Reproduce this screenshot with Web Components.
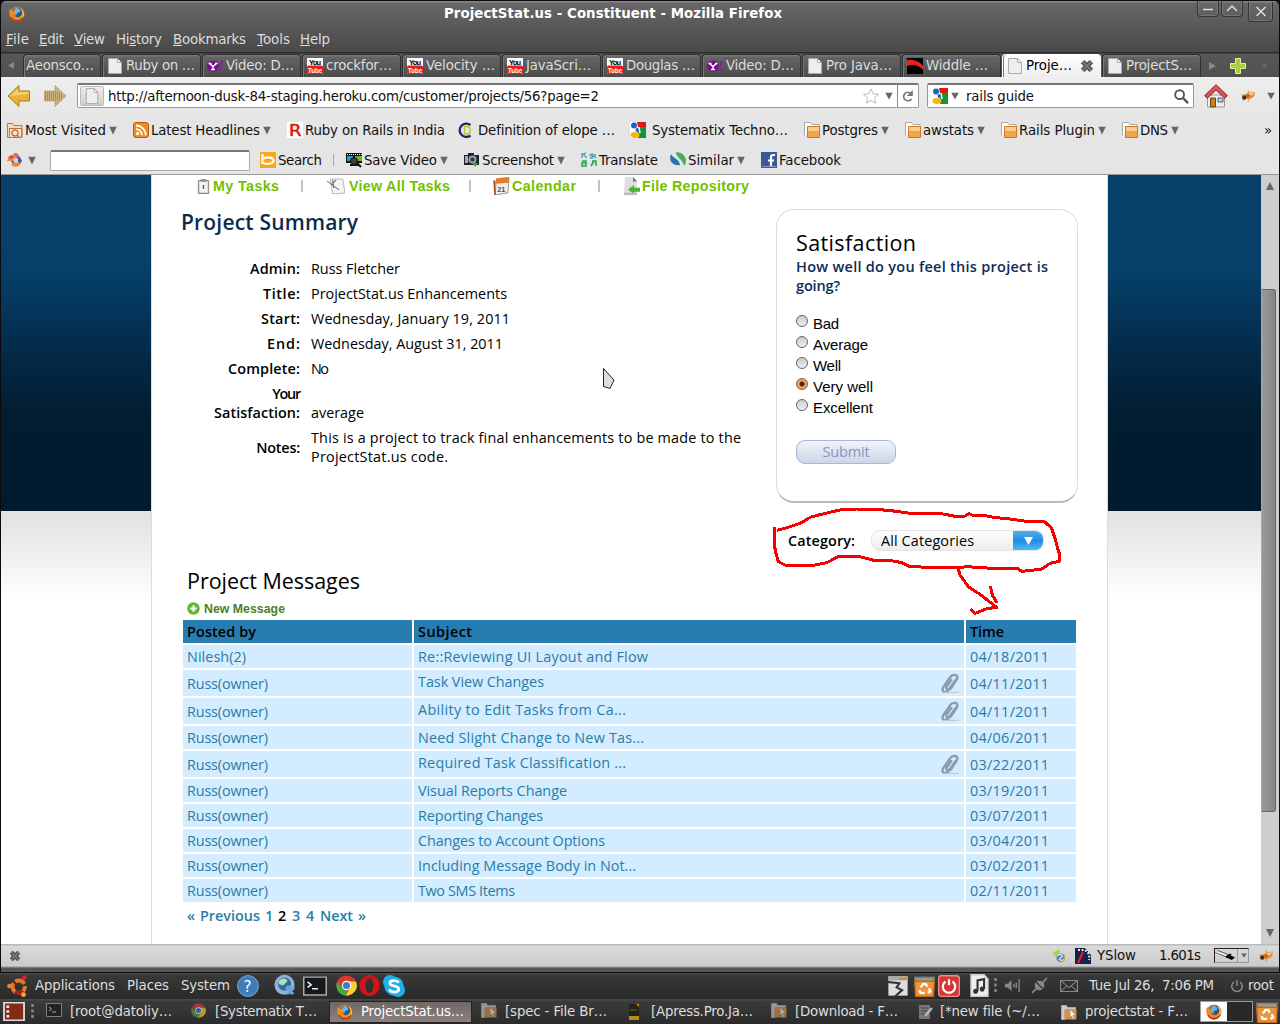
<!DOCTYPE html>
<html lang="en"><head><meta charset="utf-8"><title>ProjectStat.us - Constituent</title>
<style>
html,body{margin:0;padding:0;background:#0c0a0d}
body{width:1280px;height:1024px;overflow:hidden;font-family:"DejaVu Sans",sans-serif;font-size:13.33px}
</style></head><body>
<desktop-screen></desktop-screen>
<script>
const ICONS={
firefox:'<circle cx="8" cy="8" r="7.500" fill="#e8731c"/><circle cx="8.300" cy="6.800" r="5" fill="#215b98"/><path d="M7 2c3 0 5 2 4 4l-3 1-1 3C4 8 4 4 7 2z" fill="#69b5e2"/><path d="M1 3c1 2 3 2 4 2L7 8l-2 1c2 3 6 3 8-1 1-2 0-4-1-5 4 2 4 8 1 10-4 4-10 2-12-3C0 7 0 5 1 3z" fill="#f08a1e"/><path d="M12 3c3 3 3 7 0 9" stroke="#ffd54a" fill="none"/><path d="M2 11c3 5 9 5 12 0" stroke="#b53312" stroke-width="1.300" fill="none"/>',
page:'<path d="M1.500 .5h9l4 4v11h-13z" fill="#eee" stroke="#aaa"/><path d="M10.500 .5v4h4z" fill="#fff" stroke="#aaa"/>',
yahoo:'<ellipse cx="6" cy="8" rx="6" ry="5.500" fill="#770f8e"/><path d="M2.500 5.500L6 8.500l3.500-3M6 8.500V12M4 11.500h4M1.500 5.500h3M8 5.500h2.500" stroke="#fff" stroke-width="1.400" fill="none"/><path d="M13.500 3H16l-2 6.500h-1zM12.500 10.500h1.800v2h-1.800z" fill="#8a1aa5"/>',
youtube:'<path d="M0 0h16v16H0z" fill="#fff"/><rect y="7.500" width="16" height="8.500" rx="1.500" fill="#ee1c1b"/><text x="2" y="6.500" font-size="7.500" font-weight="700" font-family="Liberation Sans" textLength="12" fill="#000">You</text><text x="1" y="14.500" font-size="7.500" font-weight="700" font-family="Liberation Sans" textLength="14" lengthAdjust="spacingAndGlyphs" fill="#fff">Tube</text>',
widdle:'<path d="M0 0h16v16H0z" fill="#000"/><path d="M0 2c7-1 13 2 16 6v4C12 7 6 6 0 8z" fill="#ed2024"/>',
back:'<path d="M1 12L12 1.500V7h10.500v10H12v5.500z" fill="#eab13a" stroke="#b17a14"/><path d="M3 12l8-7.500V8h10.500v2z" fill="#f7cf70"/>',
forward:'<path d="M23 12L12 1.500V7H1.500v10H12v5.500z" fill="#c8b078" stroke="#a08544" stroke-dasharray="1 1"/><path d="M2 9h16M2 11h18M2 13h18M2 15h16" stroke="#8e7639" stroke-dasharray="1 1"/>',
star:'<path d="M8 .8l2.200 5 5.300.5-4 3.600 1.200 5.300L8 12.400l-4.700 2.800 1.200-5.300-4-3.600 5.300-.5z" fill="#fff" stroke="#bbb"/>',
reload:'<path d="M12.500 4.500A5.300 5.300 0 1 0 13 11" fill="none" stroke="#777" stroke-width="2"/><path d="M14.500 0v7.500H7z" fill="#777"/>',
google:'<path d="M0 0h16v16H0z" fill="#fff"/><path d="M7 0h9v5H8z" fill="#e3170a"/><path d="M8 5h8v11H8z" fill="#149337"/><circle cx="4" cy="3.500" r="3" fill="#1566c0"/><circle cx="7.500" cy="8" r="2" fill="#1566c0"/><ellipse cx="5" cy="13" rx="4.500" ry="3" fill="#f4b616"/><path d="M9 5l1 6" stroke="#fff" stroke-width="1.500"/>',
lens:'<circle cx="6" cy="6" r="4.700" fill="none" stroke="#555" stroke-width="2"/><path d="M9.500 9.500l5.500 5.500" stroke="#555" stroke-width="2.500"/>',
home:'<path d="M3.500 11h17v12h-17z" fill="#eee" stroke="#999"/><path d="M6.500 14h5v9h-5z" fill="#c98218" stroke="#6c4a14"/><path d="M14 14h5v4h-5z" fill="#b8d4ea" stroke="#557"/><path d="M12 .7L.7 11.500l2.500 2.700L12 6l8.800 8.200 2.500-2.700z" fill="#d95555" stroke="#8d2020"/>',
bug:'<path d="M3 13l3-4M8 14l1-4M1 7h5M8 2l1 4M15 4l-3 2" stroke="#b39b74" stroke-width=".8"/><ellipse cx="9.500" cy="7.500" rx="5.500" ry="3.300" transform="rotate(-25 9.500 7.500)" fill="#e08a2c"/><path d="M8 5l6-1-2 4z" fill="#f7c98a"/><circle cx="8" cy="8" r="1" fill="#a33"/><circle cx="4.200" cy="9.500" r="2.200" fill="#4b2c15"/>',
visited:'<path d="M.5 1.500h5l1.500 2h8v12H.5z" fill="#f4d9bb" stroke="#c2733a"/><rect x="2.500" y="6.500" width="12" height="9" fill="#f6e9dc" stroke="#c2733a"/><circle cx="8" cy="11" r="3" fill="none" stroke="#c2733a" stroke-width="1.400"/><path d="M10 13l3 3" stroke="#c2733a" stroke-width="1.500"/>',
rss:'<rect x=".5" y=".5" width="15" height="15" rx="2.500" fill="#f28a1d" stroke="#bd5a10"/><circle cx="4.500" cy="11.500" r="1.700" fill="#fff"/><path d="M3 7.200a6 6 0 0 1 6 6M3 3.500a9.500 9.500 0 0 1 9.700 9.700" fill="none" stroke="#fff" stroke-width="1.800"/>',
ruby:'<path d="M0 0h16v16H0z" fill="#fff"/><text x="2" y="13.500" font-size="15" fill="#e80f0f" stroke="#e80f0f" stroke-width=".5" font-family="DejaVu Sans" textLength="12.500" lengthAdjust="spacingAndGlyphs">R</text>',
cd:'<path d="M13.500 3A6.700 6.700 0 1 0 13.500 13.500" fill="none" stroke="#28206b" stroke-width="2.300"/><path d="M7.500 4.500v7.500h2c5 0 5-7.500 0-7.500z" fill="none" stroke="#b8cc22" stroke-width="1.500"/>',
folder:'<path d="M.5 13.500V.5h6l1.500 2h7v3" fill="#fff" stroke="#aaa"/><path d="M3.500 4.500h12v11h-12z" fill="#efa548" stroke="#c67b22"/><path d="M4 5h11v4H4z" fill="#f9cd8c"/>',
swirl:'<ellipse cx="9" cy="8" rx="5" ry="5" fill="#7a52b4"/><path d="M0 9c2-6 8-8 11-5l-5 5zM4 13c4 3 9 2 10-2l-4-2z" fill="#f4881f"/><circle cx="9" cy="8.500" r="2.500" fill="#b7def5"/><path d="M1 5l4-2 2 2-4 2zM6 1l6 1-3 2z" fill="#e53e61"/><path d="M11 5l4 3-1 3-3-1z" fill="#554dae"/>',
bing:'<path d="M0 0h16v16H0z" fill="#faa61a"/><path d="M2.500 2v10M3.500 6.500c4-2 10-1 10 2s-5 4-10 3" fill="none" stroke="#fff" stroke-width="2.200"/>',
film:'<path d="M0 1h16v10H0z" fill="#111"/><path d="M1 4h6v5H1z" fill="#2a9ad0"/><path d="M9 4h7v5H9z" fill="#6bb32b"/><path d="M1 2.500h15" stroke="#fff" stroke-dasharray="1 1"/><circle cx="8" cy="9" r="3.500" fill="#38423c" stroke="#111"/><path d="M4 13h8M11 11l4 4" stroke="#111" stroke-width="2"/>',
camera:'<path d="M0 3h4V1h6v2h5v10H0z" fill="#222"/><path d="M1 4h3v7H1z" fill="#aaa"/><circle cx="8.500" cy="7.500" r="4" fill="#8e9eb3"/><circle cx="8.500" cy="7.500" r="2" fill="#28354b"/><path d="M8 11h6l-3 4z" fill="#19bf19"/>',
translate:'<path d="M1 1v5M1 3l4-2M3 3l3 3M8 3h7M11 1v6M9 6c4-2 5-2 6 0" stroke="#4aa5c5" stroke-width="1.400" fill="none"/><path d="M1 9h4v5H1v-3h4M11 9h4v5M10 14l3-5" stroke="#26a456" stroke-width="1.600" fill="none"/>',
similar:'<path d="M1 2c-3 7 2 12 9 11C9 6 3 7 1 2z" fill="#2677a8"/><path d="M6 0c8 0 13 8 8 14-1-7-8-8-8-14z" fill="#4faa5b"/><path d="M3 1c1 6 8 5 9 13" stroke="#d2eef5" stroke-width="1.500" fill="none"/>',
facebook:'<path d="M0 0h16v16H0z" fill="#3b5998"/><path d="M14 3h-2c-1.500 0-2 1-2 2v10M7 8.500h6" fill="none" stroke="#fff" stroke-width="2.200"/><path d="M1 14.500h14" stroke="#8a9ac4"/>',
arrow:'<path d="M.5 1.500h15L8 15z" fill="#666"/>',
cross:'<path d="M3 3l10 10M13 3L3 13" stroke="#444" stroke-width="5.500"/><path d="M3 3l10 10M13 3L3 13" stroke="#777" stroke-width="2.500"/>',
plus:'<path d="M5.500 .5h5v5h5v5h-5v5h-5v-5h-5v-5h5z" fill="#a5cf3c" stroke="#dff0a8"/>',
tasks:'<path d="M2.500 2.500h11v13h-11z" fill="#ddd3c6" stroke="#8f7f6b"/><path d="M4 4h8v10H4z" fill="#f4f4f4"/><path d="M5 1h6v3H5z" fill="#999"/><path d="M8 7v4" stroke="#557" stroke-width="1.500"/>',
alltasks:'<path d="M3 1l11 0 2 14-11 1z" fill="#f5f5f5" stroke="#aaa" stroke-width=".8"/><path d="M0 3l6 5 5 4M5 2l1 8M4 7l4-5" stroke="#666" stroke-width=".9" fill="none"/>',
calendar:'<path d="M3 3l12-2-1 13L2 16z" fill="#f2eee8" stroke="#a98"/><path d="M3 1l12-1v5L2 6z" fill="#e87928"/><path d="M1 3l1 13" stroke="#a14f25" stroke-width="1.500"/><text x="4" y="13.500" font-size="7" font-weight="700" fill="#555" font-family="Liberation Sans">21</text>',
repo:'<path d="M1 0h9l3 4v12H0z" fill="#dedede"/><path d="M9 0l4 4H9z" fill="#777"/><path d="M4 11l6-4v2.500h6v3.500h-6V15z" fill="#4db32a"/><path d="M0 15h13" stroke="#bbb" stroke-width="2"/>',
add:'<circle cx="8" cy="8" r="7.700" fill="#62b92a"/><path d="M8 4v8M4 8h8" stroke="#fff" stroke-width="2.600"/>',
clip:'<path d="M2.500 11.500L8 3.500c2-3 7.500-2.500 5.500 1.500L9 12c-2 2.500-5 1-3.500-1.500l4-5.500M2.500 11.500c-2 4 2.500 4.500 4 2.500L13 5" fill="none" stroke="#8b9ba7" stroke-width="1.900"/><path d="M3 15.500h12" stroke="#b5c7d3" stroke-width=".8"/>',
ubuntu:'<circle cx="8.500" cy="8.500" r="4.500" fill="none" stroke="#e8752a" stroke-width="2.800" stroke-dasharray="7.500 1.500"/><path d="M12 12a5 5 0 0 1-6 0" stroke="#a7211b" stroke-width="2.800" fill="none"/><circle cx="1.800" cy="8" r="1.700" fill="#f0822e"/><circle cx="12.500" cy="2" r="1.800" fill="#d0282c"/><circle cx="12" cy="14.300" r="1.700" fill="#f7a53a"/>',
help:'<circle cx="8" cy="8" r="7.600" fill="#3f7db8" stroke="#79a9d4" stroke-width=".7"/><text x="4.800" y="12" font-size="11" fill="#fff" font-family="DejaVu Sans">?</text>',
globe:'<circle cx="8" cy="7.500" r="7" fill="#8fb4d8"/><circle cx="8" cy="7" r="4.500" fill="#2e6a9c"/><path d="M4 5c2-3 6-2 6 0L7 8l-3-1z" fill="#afe1b5"/><path d="M9 9l5 5M10 10h5M11 8v6" stroke="#6ea2da" stroke-width="2"/>',
terminal:'<path d="M.5 1.500h15v13H.5z" fill="#15191b" stroke="#aaa"/><path d="M3 5l2.500 2L3 9M6 10h4" stroke="#eee" fill="none"/>',
chrome:'<circle cx="8" cy="8" r="7.700" fill="#db3a2e"/><path d="M1 5l3.500 5 4 1L7.500 15.700C2 15-1 10 1 5z" fill="#3eae49"/><path d="M8 5h7c3 5-2 11-7.500 10.700L11 9z" fill="#f8d334"/><circle cx="8" cy="8" r="3.600" fill="#fff"/><circle cx="8" cy="8" r="2.700" fill="#3b79ca"/>',
opera:'<path fill-rule="evenodd" d="M8 0a7.700 8 0 1 0 .01 0zM8 2.500c4 0 4 11 0 11s-4-11 0-11z" fill="#d3141b"/>',
skype:'<circle cx="5" cy="5" r="5" fill="#1fb0ec"/><circle cx="11" cy="11" r="5" fill="#1fb0ec"/><circle cx="8" cy="8" r="7" fill="#1fb0ec"/><path d="M11.500 5.500C10 3.500 5 3.500 5 6s6.500 1.500 6.500 4.200-5.500 3-7 .3" fill="none" stroke="#fff" stroke-width="2"/>',
zip:'<path d="M1 1h14v14H1z" fill="#ddd"/><path d="M1 1h14v3H1z" fill="#aaa"/><path d="M9 2h6v1.500H9z" fill="#d9892e"/><path d="M0 5l9 1-2 3 4 2-5 4.500" stroke="#333" stroke-width="1.500" fill="none"/>',
trash:'<path d="M.5 1.500h15l-.5 4H1z" fill="#999" stroke="#777"/><path d="M.5 4.500h15l-.7 11H1.200z" fill="#ec9639" stroke="#bd6c1b"/><path d="M5 9l2-2.500h2l1 2M11.500 9.500l1 2.500-2 1M8 13H5l-1-2" fill="none" stroke="#fff" stroke-width="1.700"/>',
power:'<rect x=".5" y=".5" width="15" height="15" rx="2" fill="#d53636" stroke="#ef8b83"/><path d="M5.500 4.700a4.500 4.500 0 1 0 5 0M8 3v4.500" fill="none" stroke="#fff" stroke-width="1.600"/>',
music:'<path d="M1.500 .5h10l3 3v12h-13z" fill="#eee" stroke="#ccc"/><path d="M6.500 12V4.500l5-1v7" fill="none" stroke="#333" stroke-width="1.600"/><circle cx="5" cy="12" r="1.800" fill="#333"/><circle cx="10" cy="10.500" r="1.800" fill="#333"/>',
dots:'<path d="M8 0v16" stroke="#888" stroke-width="8" stroke-dasharray="3 2.500"/>',
volume:'<path d="M0 6h3l4-4v12l-4-4H0z" fill="#888"/><path d="M9.500 6v4M12 5v6M15 1v14" stroke="#888" stroke-width="1.500"/>',
plug:'<path d="M1 15l4-4M11 5l4-4" stroke="#888" stroke-width="1.500"/><circle cx="8" cy="8" r="4.500" fill="#888"/><path d="M4 4l8 8" stroke="#333"/>',
mail:'<path d="M.5 2.500h15v11H.5zM.5 2.500l7.500 7 7.500-7M.5 13.500L6 8M15.500 13.500L10 8" fill="none" stroke="#888"/>',
shut:'<path d="M4.500 3.500a6 6 0 1 0 7 0M8 1v7" fill="none" stroke="#888" stroke-width="1.800"/>',
desktop:'<path d="M.7.700h14.600v14.600H.7z" fill="#842b18" stroke="#ddd" stroke-width="1.300"/><path d="M2.500 3h2v2h-2zM2.500 7h2v2h-2zM2.500 11h2v2h-2z" fill="#eee"/>',
files:'<path d="M.5 3V1.500h5l1 2h8v2H4v10H.5z" fill="#ccc" stroke="#aaa"/><path d="M3.500 5.500h12v10h-12z" fill="#dd8f42"/><path d="M9 5l6 6-3 .5 1.500 3-1.500 1-1.500-3.500L9 14z" fill="#eee" stroke="#777" stroke-width=".5"/>',
book:'<path d="M3 0h10v12H3z" fill="#252219"/><path d="M3 12h10v4H3zM10 0h3v3z" fill="#b38c19"/><path d="M4 6h7" stroke="#74602b"/>',
note:'<path d="M2 1h11v14H2z" fill="#777"/><path d="M4 4h7M4 7h6M4 10h4" stroke="#444"/><path d="M15 4l-7 8" stroke="#bbb" stroke-width="2"/>',
globe2:'<path d="M1 4l8-4-1 5 3 3-5 1-4-2z" fill="#a5d838"/><circle cx="10" cy="10" r="5" fill="#4e7cbd"/><path d="M6 8c4-4 8 0 4 2s0 4 4 2" stroke="#dfeaf5" fill="none" stroke-width="1.500"/><path d="M14 7v6l-4 2" stroke="#dca925" stroke-width="1.500" fill="none"/>',
yslow:'<path d="M0 0h10l6 7v9H0z" fill="#17214d"/><path d="M3 2h6c4 1 6 5 5 10" stroke="#eee" stroke-dasharray="2 1.500" fill="none" stroke-width="2"/><path d="M3 15L8 4" stroke="#ee1d25" stroke-width="2"/>',
dropper:'<path d="M1 3l8 5" stroke="#555" stroke-width="4"/><path d="M1 3l8 5" stroke="#eee" stroke-width="2"/><path d="M9 8l5 4" stroke="#000" stroke-width="4"/><path d="M9 11l3-5" stroke="#000" stroke-width="1.500"/>'
};
class Base extends HTMLElement{
  constructor(){super();this.attachShadow({mode:'open'})}
  connectedCallback(){this.shadowRoot.innerHTML='<style>:host{display:block;box-sizing:border-box}*{box-sizing:border-box}.row{display:flex;align-items:center}.row>*{flex:none}'+(this.constructor.css||'')+'</style>'+this.html()}
}
const def=(name,css,html)=>customElements.define(name,class extends Base{static css=css;html(){return html.call(this)}});
const T=(t,w,cls='')=>`<fit-text w="${w}" class="${cls}">${t}</fit-text>`;
const I=(n,w=16,h=w)=>`<ui-icon name="${n}" w="${w}" h="${h}"></ui-icon>`;
/* Lays items out one after another; each entry is [start, width, markup]. */
const strip=(origin,list)=>{let e=origin;return list.map(([x,w,m])=>{const g=x-e;e=x+w;return `<div style="display:flex;align-items:center;width:${w}px;margin-left:${g}px">${m}</div>`}).join('')};

customElements.define('ui-icon',class extends Base{html(){const n=this.getAttribute('name'),w=this.getAttribute('w'),h=this.getAttribute('h'),s=['back','forward','home'].includes(n)?24:16;
 return `<style>:host{display:inline-block;flex:none;width:${w}px;height:${h}px}svg{display:block}</style><svg width="${w}" height="${h}" viewBox="0 0 ${s} ${s}" preserveAspectRatio="none">${ICONS[n]}</svg>`}});
customElements.define('fit-text',class extends Base{
 html(){return '<style>:host{display:inline-block;flex:none;white-space:pre}span{display:inline-block}</style><span><slot></slot></span>'}
 connectedCallback(){super.connectedCallback();const w=+this.getAttribute('w'),n=this.textContent.length;
  const nat=this.shadowRoot.querySelector('span').getBoundingClientRect().width;
  if(nat&&n>1)this.style.letterSpacing=((w-nat)/(n-1)).toFixed(3)+'px';this.style.width=w+'px'}
});

def('browser-title',`:host{height:51px;background:linear-gradient(#858585 0 1px,#676767 2px,#4a4a4a 49px);border-radius:5px 5px 0 0;color:#ddd}
.t{height:25px;color:#fff;font-weight:bold}.m{height:26px}
.b{border:1px solid #333;border-top:0;border-radius:0 0 4px 4px;box-shadow:inset 0 0 0 1px #777;justify-content:center;height:16px;margin-bottom:9px}.c{height:20px;margin-bottom:4px}`,
function(){const b=(p,c='')=>`<div class="row b ${c}" style="width:100%"><svg width="12" height="12" viewBox="0 0 12 12"><path d="${p}" fill="none" stroke="#ddd" stroke-width="1.500"/></svg></div>`;
return `<div class="row t">${strip(1,[[9,16,I('firefox')],[444,338,T('ProjectStat.us - Constituent - Mozilla Firefox',338)],[1197,22,b('M1 6.500h10')],[1221,22,b('M1 8l5-5 5 5')],[1248,25,b('M1.500 2l9 9M10.500 2l-9 9','c')]])}</div>
<div class="row m">${strip(1,[[6,23,T('<u>F</u>ile',23)],[39,25,T('<u>E</u>dit',25)],[74,31,T('<u>V</u>iew',31)],[116,46,T('Hi<u>s</u>tory',46)],[173,73,T('<u>B</u>ookmarks',73)],[257,33,T('<u>T</u>ools',33)],[300,30,T('<u>H</u>elp',30)]])}</div>`});

def('browser-tab',`:host{width:98px;height:23px;border:1px solid #2f2f2f;border-bottom:0;border-radius:4px 4px 0 0;background:linear-gradient(#777 0 1px,#646464 2px,#4c4c4c);color:#ddd;box-shadow:inset 1px 0 #777}
:host([active]){background:linear-gradient(#fff,#eee);color:#000;border-color:#fff}.row{height:21px}`,
function(){const i=this.getAttribute('icon'),w=+this.getAttribute('tw');return `<div class="row">${strip(0,[...(i?[[4,16,I(i)]]:[]),[i?23:2,w,T(this.getAttribute('label'),w)],...(this.hasAttribute('active')?[[77,14,I('cross',14)]]:[])])}</div>`});
def('tab-strip',`:host{height:25px;background:linear-gradient(#2c2c2c 0 1px,#585858 2px,#505050);color:#888}:host>div{height:25px}.row{align-items:flex-end!important}.z{display:flex;align-items:center;height:23px}`,
function(){const a=[['','Aeonsco…',68],['page','Ruby on …',69],['yahoo','Video: D…',68],['youtube','crockfor…',66],['youtube','Velocity …',69],['youtube','JavaScri…',65],['youtube','Douglas …',69],['yahoo','Video: D…',68],['page','Pro Java…',66],['widdle','Widdle …',62],['page','Proje…',46],['page','ProjectS…',66]];
return `<div class="row">${strip(1,[[8,8,'<div class="z"><svg width="6" height="7"><path d="M6 0v7L0 3.500z" fill="#888"/></svg></div>'],...a.map((t,k)=>{const x=k?2+100*k:23,w=k?99:78;return [x,w,`<browser-tab style="width:${w}px" ${k==10?'active':''} icon="${t[0]}" label="${t[1]}" tw="${t[2]}"></browser-tab>`]}),[1209,8,'<div class="z"><svg width="7" height="8"><path d="M0 0v8l7-4z" fill="#888"/></svg></div>'],[1230,16,`<div class="z">${I('plus')}</div>`],[1261,7,`<div class="z">${I('arrow',7,6)}</div>`]])}</div>`});

def('nav-bar',`:host{height:38px;background:linear-gradient(#eee,#e6e6e6);color:#111}:host>.row{height:37px}.f{border:1px solid #999;border-top:2px solid #777;border-radius:2px;background:#fff;height:25px}.id{width:24px;height:20px;background:linear-gradient(#eee,#ccc);border:1px solid #bbb;border-radius:2px;justify-content:center}.s{height:22px;width:1px;background:#888}`,
function(){return `<div class="row">${strip(1,[[7,24,I('back',24)],[43,24,I('forward',24)],
[77,842,`<div class="row f" style="width:842px">${strip(78,[[80,24,`<div class="row id">${I('page',14,16)}</div>`],[108,491,T('http://afternoon-dusk-84-staging.heroku.com/customer/projects/56?page=2',491)],[863,16,I('star')],[885,8,I('arrow',8)],[897,1,'<div class="s"></div>'],[901,13,I('reload',13)]])}</div>`],
[927,267,`<div class="row f" style="width:267px">${strip(928,[[932,16,I('google')],[951,8,I('arrow',8)],[966,68,T('rails guide',68)],[1174,16,I('lens',15)]])}</div>`],[1204,24,I('home',24)],[1240,16,I('bug')],[1267,8,I('arrow',8)]])}</div>`});

const menuItem=(x,icon,tx,t,w,ax)=>[[x,16,I(icon)],[tx,w,T(t,w)],...(ax?[[ax,8,I('arrow',8,9)]]:[])];
def('bookmark-bar',`:host{height:30px;background:#e5e5e5;color:#111}:host>.row{height:30px}`,function(){return `<div class="row">${strip(1,[
...menuItem(7,'visited',25,'Most Visited',81,109),...menuItem(133,'rss',151,'Latest Headlines',109,263),...menuItem(287,'ruby',305,'Ruby on Rails in India',140),...menuItem(457,'cd',478,'Definition of elope …',137),...menuItem(630,'google',652,'Systematix Techno…',136),...menuItem(804,'folder',822,'Postgres',56,881),...menuItem(905,'folder',923,'awstats',51,977),...menuItem(1001,'folder',1019,'Rails Plugin',76,1098),...menuItem(1122,'folder',1140,'DNS',28,1171),[1264,9,T('»',9)]])}</div>`});
def('addon-bar',`:host{height:30px;background:#e5e5e5;color:#111;border-bottom:1px solid #999}:host>.row{height:30px}input{width:200px;height:21px;border:1px solid #aaa;border-top:2px solid #777;border-radius:2px;background:#fff;padding:0}.s{width:1px;height:12px;background:#aaa}`,
function(){return `<div class="row">${strip(1,[[7,16,I('swirl')],[28,8,I('arrow',8,9)],[50,200,'<input aria-label="Toolbar search">'],...menuItem(260,'bing',278,'Search',44),[333,1,'<div class="s"></div>'],...menuItem(346,'film',364,'Save Video',73,440),...menuItem(464,'camera',482,'Screenshot',72,557),...menuItem(581,'translate',599,'Translate',59),...menuItem(670,'similar',688,'Similar',46,737),...menuItem(761,'facebook',779,'Facebook',62)])}</div>`});

def('page-links',`:host{height:24px;font:bold 14.3px "Liberation Sans",sans-serif;color:#74c000}.row{height:21px}.s{width:2px;height:12px;background:#c4c4c4}`,
function(){const s='<div class="s"></div>';return `<div class="row">${strip(152,[[196,15,I('tasks',15,16)],[213,66,T('My Tasks',66)],[301,2,s],[327,18,I('alltasks',18,16)],[349,101,T('View All Tasks',101)],[469,2,s],[493,17,I('calendar',17,18)],[512,64,T('Calendar',64)],[598,2,s],[624,16,I('repo',16,18)],[642,107,T('File Repository',107)]])}</div>`});
def('project-summary',`:host{width:576px;padding:9px 0 0 29px;color:#000;font-size:14.4px;line-height:19px}
h2{margin:0 0 19px;height:29px;font:600 21px/29px "Open Sans",sans-serif;color:#0c2c4e}.g{display:grid;grid-template-columns:119px 1fr;column-gap:11px}
dl{margin:0}dt{margin:0;padding:3px 0;text-align:right;font-weight:600;align-self:center}dd{margin:0;padding:3px 0;align-self:end}fit-text{vertical-align:top}`,
function(){const r=[['Admin:',50,'Russ Fletcher',89],['Title:',37,'ProjectStat.us Enhancements',196],['Start:',39,'Wednesday, January 19, 2011',199],['End:',33,'Wednesday, August 31, 2011',192],['Complete:',72,'No',18]];
return `<h2>${T('Project Summary',177)}</h2><dl class="g">${r.map(a=>`<dt>${T(a[0],a[1])}</dt><dd>${T(a[2],a[3])}</dd>`).join('')}<dt>${T('Your',29)}<br>${T('Satisfaction:',86)}</dt><dd>${T('average',53)}</dd><dt>${T('Notes:',44)}</dt><dd>${T('This is a project to track final enhancements to be made to the',430)}<br>${T('ProjectStat.us code.',137)}</dd></dl>`});
def('radio-option',`:host{height:21px;font:15px/21px "Liberation Sans",sans-serif}.row{align-items:flex-start}i{width:12px;height:12px;margin:1px 5px 0 0;border:1px solid #666;border-radius:50%;background:linear-gradient(#ccc,#eee)}:host([checked]) i{background:radial-gradient(circle,#552208 0 2px,#f2a660 3px,#e9a15e)}fit-text{margin-top:-1px}`,
function(){return `<div class="row"><i></i>${T(this.getAttribute('label'),this.getAttribute('w'))}</div>`});
def('satisfaction-card',`:host{width:302px;height:294px;border:1px solid #ddd;border-bottom:2px solid #bbb;border-radius:18px;padding:19px;color:#000}
h3{margin:0;font:400 21.5px/28px "Open Sans",sans-serif;height:28px}p{margin:0 0 19px;font:600 14.5px/19px "Open Sans",sans-serif;color:#0c2c56}fit-text{vertical-align:top}button{display:block;margin-top:21px;width:100px;height:24px;border:1px solid #aab4df;border-radius:9px;background:linear-gradient(#f1f3f9,#ccd5e8);font:14.5px/20px "Open Sans",sans-serif;color:#8c93c1;padding:0}`,
function(){return `<h3>${T('Satisfaction',120)}</h3><p>${T('How well do you feel this project is',252)}<br>${T('going?',44)}</p>${[['Bad',26],['Average',55],['Well',28],['Very well',60],['Excellent',60]].map((a,i)=>`<radio-option label="${a[0]}" w="${a[1]}" ${i==3?'checked':''}></radio-option>`).join('')}<button>${T('Submit',47)}</button>`});
def('category-filter',`:host{height:21px;margin:3px 0 0 636px;font-size:14.4px;color:#000}.row{gap:16px}b{font-weight:600}.s{width:173px;height:21px;border:1px solid #e4e4e4;border-radius:9px;background:linear-gradient(#fff,#ececec);overflow:hidden;padding-left:9px;justify-content:space-between}.a{display:flex;width:30px;height:21px;background:linear-gradient(#54b4f2,#268be0 50%,#4fc0fb);align-items:center;justify-content:center}`,
function(){return `<div class="row"><b>${T('Category:',67)}</b><div class="row s">${T('All Categories',93)}<div class="a"><svg width="9" height="8"><path d="M0 0h9L4.500 8z" fill="#fff"/></svg></div></div></div>`});
def('message-list',`:host{padding:16px 0 0 31px;font-size:14.4px;color:#287ca6}h2{margin:0 0 0 4px;height:28px;font:400 21.500px/28px "Open Sans",sans-serif;color:#000}.n{height:23px;margin:2px 0 0 4px;gap:4px;font:bold 12.3px "Liberation Sans",sans-serif;color:#4b7f2a}
.g{display:grid;grid-template-columns:229px 550px 110px;gap:2px}.h{display:contents;color:#000;font-weight:600}.g>div>div,.c{height:23px;display:flex;align-items:center;padding:0 4px}.h>div{background:#277cb2}.c{background:#d4ecff}.c.k{height:26px}.c.k.j{justify-content:space-between}.c.k.j fit-text{position:relative;top:-2px}.p{margin:4px 0 0 4px;height:19px;gap:5px;font-weight:600}.p b{color:#000;font-weight:600}`,
function(){const r=[['Re::Reviewing UI Layout and Flow',230,'04/18/2011'],['Task View Changes',126,'04/11/2011',1],['Ability to Edit Tasks from Ca...',208,'04/11/2011',1],['Need Slight Change to New Tas...',226,'04/06/2011'],['Required Task Classification ...',208,'03/22/2011',1],['Visual Reports Change',149,'03/19/2011'],['Reporting Changes',125,'03/07/2011'],['Changes to Account Options',187,'03/04/2011'],['Including Message Body in Not...',218,'03/02/2011'],['Two SMS Items',97,'02/11/2011']];
return `<h2>${T('Project Messages',173)}</h2><div class="row n">${I('add',13)}${T('New Message',81)}</div><div class="g"><div class="h"><div>${T('Posted by',69)}</div><div>${T('Subject',54)}</div><div>${T('Time',34)}</div></div>${r.map((a,i)=>{const k=a[3]?'k':'';return `<div class="c ${k}">${i?T('Russ(owner)',81):T('Nilesh(2)',59)}</div><div class="c ${k} j">${T(a[0],a[1])}${k?I('clip',20,20):''}</div><div class="c ${k}">${T(a[2],79)}</div>`}).join('')}</div>
<div class="row p">${T('«',8)}${T('Previous',60)}${T('1',8)}<b>${T('2',9)}</b>${T('3',9)}${T('4',9)}${T('Next',33)}${T('»',8)}</div>`});
def('ink-note',`:host{position:absolute;left:760px;top:500px;width:320px;height:125px;pointer-events:none}`,
function(){return `<svg width="320" height="125" viewBox="0 0 960 375" shape-rendering="crispEdges"><g fill="none" stroke="#f40000" stroke-width="9" stroke-linejoin="round" stroke-linecap="square"><path d="M55 90L75 85 105 75 125 68 150 52 180 44 205 38 240 30 290 27 345 27 370 30 410 34 450 40 500 40 550 42 580 48 615 48 628 41 642 48 670 46 700 52 750 57 800 64 855 66 875 85 885 115 893 145 898 160 898 184 870 190 845 207 815 211 785 214 770 204 680 204 620 200 590 204 550 202 515 202 450 200 425 188 400 183 345 182 300 170 235 170 200 188 165 195 75 195 55 185 48 160 42 130 42 85"/><path d="M595 208L600 225 625 260 660 283 710 322M692 263L697 285 709 305M710 322L680 326 645 340 635 330"/></g></svg>`});
def('mouse-pointer',`:host{position:absolute;left:602px;top:367px}`,function(){return `<svg width="16" height="24"><path d="M1.500 1.500v18l6.500 2 4-8.500z" fill="#ddd" stroke="#222"/></svg>`});
def('scroll-track',`:host{width:18px;background:#cecece;padding:7px 0;display:flex;flex-direction:column}svg{margin-left:5px;flex:none}.t{height:523px;margin-top:99px;width:15px;background:linear-gradient(90deg,#999,#858585);border:1px solid #666;border-left-color:#aaa;border-radius:0 3px 3px 0}.e{flex:1}`,
function(){return `<svg width="8" height="8"><path d="M4 0l4 8H0z" fill="#666"/></svg><div class="t"></div><div class="e"></div><svg width="8" height="8"><path d="M0 0h8L4 8z" fill="#666"/></svg>`});
def('page-view',`:host{height:769px;display:flex;background:#fff;overflow:hidden}.v{width:1260px;display:flex;justify-content:center;background:linear-gradient(#07416b,#064069 95px,#042d4e 165px,#021d30 240px,#021a2d 336px,#e1e1e1 336px,#fff 425px)}
.col{width:957px;margin-right:3px;background:#fff;border:solid #ddd;border-width:0 1px;font-family:"Open Sans",sans-serif}.two{display:flex;height:328px}satisfaction-card{margin:10px 0 0 48px}`,
function(){return `<div class="v"><div class="col"><page-links></page-links><div class="two"><project-summary></project-summary><satisfaction-card></satisfaction-card></div><category-filter></category-filter><message-list></message-list></div></div><scroll-track></scroll-track>`});
def('status-bar',`:host{height:28px;background:linear-gradient(#bbb 0 1px,#dadada 2px,#cbcbcb 22px,#999 23px,#585858 24px);color:#111}:host>.row{height:23px}.d{width:35px;height:15px;border:1px solid #222;border-right-color:#999;border-bottom-color:#999;gap:1px}.d i{width:1px;height:13px;background:#999;margin-right:2px}`,
function(){return `<div class="row">${strip(1,[[9,12,I('cross',12)],[1052,14,I('globe2',14)],[1075,16,I('yslow')],[1097,39,T('YSlow',39)],[1159,42,T('1.601s',42)],[1214,35,`<div class="row d">${I('dropper',21,13)}<i></i>${I('arrow',6,5)}</div>`],[1258,16,I('bug')]])}</div>`});
def('top-panel',`:host{height:26px;background:linear-gradient(#4a4a4a 0 1px,#383838 2px,#2a2a2a);color:#ddd}:host>.row{height:25px}`,
function(){return `<div class="row">${strip(0,[[7,22,I('ubuntu',22)],[35,80,T('Applications',80)],[127,42,T('Places',42)],[181,49,T('System',49)],[237,22,I('help',22)],[273,23,I('globe',23)],[303,24,I('terminal',24,22)],[336,21,I('chrome',21)],[359,21,I('opera',21)],[383,22,I('skype',22)],[887,22,I('zip',22)],[914,21,I('trash',21,22)],[938,22,I('power',22)],[969,21,I('music',21,23)],[993,5,I('dots',5,16)],[1005,15,I('volume',15)],[1031,17,I('plug',17)],[1060,18,I('mail',18,16)],[1089,125,T('Tue Jul 26,  7:06 PM',125)],[1230,14,I('shut',14)],[1248,26,T('root',26)]])}</div>`});
def('task-panel',`:host{height:25px;background:linear-gradient(#484848 0 1px,#3b3b3b 2px,#2b2b2b);color:#ddd}:host>.row{height:25px}.a{width:143px;height:22px;background:linear-gradient(#706866,#8b807d);border:1px solid #222;color:#fff}.w{width:53px;height:21px;border:1px solid #999;background:linear-gradient(90deg,#fff 50%,#292929 50%);padding-left:5px}.dim{opacity:.65}`,
function(){const m=h=>`<div class="dim">${h}</div>`;return `<div class="row">${strip(0,[[3,22,I('desktop',22,19)],[30,5,I('dots',5,16)],[46,16,m(I('terminal'))],[70,102,T('[root@datoliy…',102)],[191,15,m(I('chrome',15))],[215,102,T('[Systematix T…',102)],[329,143,`<div class="row a">${strip(330,[[337,16,I('firefox')],[361,103,T('ProjectStat.us…',103)]])}</div>`],[481,16,m(I('files'))],[505,102,T('[spec - File Br…',102)],[626,16,I('book')],[651,102,T('[Apress.Pro.Ja…',102)],[771,16,m(I('files'))],[795,103,T('[Download - F…',103)],[917,16,I('note')],[940,100,T('[*new file (~/…',100)],[1061,16,I('files')],[1085,103,T('projectstat - F…',103)],[1200,53,`<div class="row w">${I('firefox')}</div>`],[1256,22,I('trash',22)]])}</div>`});
def('desktop-screen',`:host{display:flex;flex-direction:column;width:1280px;height:1024px;position:relative}.win{margin:1px 1px 0;display:flex;flex-direction:column}.g{height:1px}`,
function(){return `<div class="win"><browser-title></browser-title><tab-strip></tab-strip><nav-bar></nav-bar><bookmark-bar></bookmark-bar><addon-bar></addon-bar><page-view></page-view><status-bar></status-bar></div><div class="g"></div><top-panel></top-panel><task-panel></task-panel><ink-note></ink-note><mouse-pointer></mouse-pointer>`});
</script></body></html>
